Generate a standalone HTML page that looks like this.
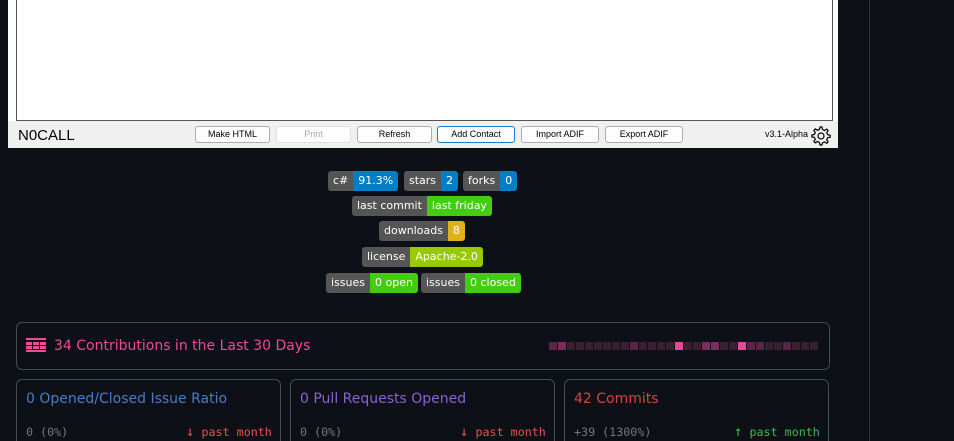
<!DOCTYPE html><html><head><style>
html,body{margin:0;width:954px;height:441px;overflow:hidden}
body{background:#0d1117;position:relative;font-family:"DejaVu Sans","Liberation Sans",sans-serif}
.a{position:absolute}
.vl{left:869px;top:0;width:1px;height:441px;background:#30363d}
.win{left:8px;top:0;width:830px;height:148px;background:#f0f0f0}
.wt{left:0;top:0;width:830px;height:121px;background:#fff}
.txt{left:8px;top:0;width:815px;height:120px;background:#fff;border:1px solid #555;border-top:none}
.btn{position:absolute;top:126px;height:15px;border:1px solid #adadad;border-radius:3px;background:#fdfdfd;font:9px "Liberation Sans",sans-serif;color:#000;text-align:center;line-height:15px}
.bd{position:absolute;height:20px;display:flex;border-radius:3px;overflow:hidden;font-size:11px;color:#fff;line-height:20px}
.bd span{padding:0 5px}
.l{background:#555}
.card{position:absolute;border:1px solid #444c56;border-radius:6px}
.mono{font-family:"DejaVu Sans Mono","Liberation Mono",monospace;font-size:11.7px}
i{display:block;width:8px;height:8px}
</style></head><body>
<div class="a vl"></div>
<div class="a win"><div class="a wt"></div><div class="a txt"></div>
<div class="a" style="left:10px;top:127px;font:15px 'Liberation Sans',sans-serif;color:#000">N0CALL</div>
<div class="btn" style="left:187px;width:73px">Make HTML</div>
<div class="btn" style="left:268px;width:73px;color:#aaa;border-color:#e0e0e0">Print</div>
<div class="btn" style="left:349px;width:73px">Refresh</div>
<div class="btn" style="left:429px;width:76px;border-color:#1f7ad6">Add Contact</div>
<div class="btn" style="left:513px;width:76px">Import ADIF</div>
<div class="btn" style="left:597px;width:76px">Export ADIF</div>
<div class="a" style="left:757px;top:129px;font:9px 'Liberation Sans',sans-serif">v3.1-Alpha</div>
<svg class="a" style="left:799px;top:124px" width="26" height="24" viewBox="0 0 24 24"><path d="M12 3l2 0 .5 2.5 2 1 2.2-1.4 1.4 1.4-1.4 2.2 1 2 2.5.5v2l-2.5.5-1 2 1.4 2.2-1.4 1.4-2.2-1.4-2 1L14 21h-2l-.5-2.5-2-1-2.2 1.4-1.4-1.4 1.4-2.2-1-2L3.8 13v-2l2.5-.5 1-2L5.9 6.3l1.4-1.4 2.2 1.4 2-1z" fill="none" stroke="#000" stroke-width="1.2"/><circle cx="13" cy="12" r="3" fill="none" stroke="#000" stroke-width="1.2"/></svg>
</div>
<div class="bd" style="left:328px;top:171px"><span class="l">c#</span><span style="background:#007ec6">91.3%</span></div>
<div class="bd" style="left:404px;top:171px"><span class="l">stars</span><span style="background:#007ec6">2</span></div>
<div class="bd" style="left:463px;top:171px"><span class="l">forks</span><span style="background:#007ec6">0</span></div>
<div class="bd" style="left:352px;top:196px"><span class="l">last commit</span><span style="background:#4c1">last friday</span></div>
<div class="bd" style="left:379px;top:221px"><span class="l">downloads</span><span style="background:#dfb317">8</span></div>
<div class="bd" style="left:362px;top:247px"><span class="l">license</span><span style="background:#97ca00">Apache-2.0</span></div>
<div class="bd" style="left:326px;top:273px"><span class="l">issues</span><span style="background:#4c1">0 open</span></div>
<div class="bd" style="left:421px;top:273px"><span class="l">issues</span><span style="background:#4c1">0 closed</span></div>
<div class="card" style="left:16px;top:322px;width:812px;height:46px"></div>
<svg class="a" style="left:26px;top:338px" width="20" height="14"><g fill="#f0489a"><rect x="0" y="0" width="20" height="2"/><rect x="0" y="4" width="6" height="3"/><rect x="7" y="4" width="6" height="3"/><rect x="14" y="4" width="6" height="3"/><rect x="0" y="8" width="6" height="3"/><rect x="7" y="8" width="6" height="3"/><rect x="14" y="8" width="6" height="3"/><rect x="0" y="12" width="20" height="2"/></g></svg>
<div class="a" style="left:54px;top:338px;font-size:14px;color:#f0489a">34 Contributions in the Last 30 Days</div>
<div class="card" style="left:16px;top:379px;width:263px;height:80px"></div>
<div class="card" style="left:290px;top:379px;width:263px;height:80px"></div>
<div class="card" style="left:564px;top:379px;width:263px;height:80px"></div>
<div class="a" style="left:26px;top:391px;font-size:14px;color:#4b7cc6">0 Opened/Closed Issue Ratio</div>
<div class="a" style="left:300px;top:391px;font-size:14px;color:#8a63d2">0 Pull Requests Opened</div>
<div class="a" style="left:574px;top:391px;font-size:14px;color:#d5433f">42 Commits</div>
<div class="a mono" style="left:26px;top:425px;color:#777">0 (0%)</div>
<div class="a mono" style="left:186px;top:424px;color:#e5534b"><b style="font-size:14px;font-weight:normal">↓</b> past month</div>
<div class="a mono" style="left:300px;top:425px;color:#777">0 (0%)</div>
<div class="a mono" style="left:460px;top:424px;color:#e5534b"><b style="font-size:14px;font-weight:normal">↓</b> past month</div>
<div class="a mono" style="left:574px;top:425px;color:#777">+39 (1300%)</div>
<div class="a mono" style="left:734px;top:424px;color:#3fb950"><b style="font-size:14px;font-weight:normal">↑</b> past month</div>
<div class="a" style="left:549px;top:342px;display:flex;gap:1px">
<i style="background:#5a2547"></i><i style="background:#7a2e5e"></i><i style="background:#3a1f33"></i><i style="background:#3a1f33"></i><i style="background:#3a1f33"></i><i style="background:#3a1f33"></i><i style="background:#3a1f33"></i><i style="background:#3a1f33"></i><i style="background:#3a1f33"></i><i style="background:#5a2547"></i><i style="background:#3a1f33"></i><i style="background:#3a1f33"></i><i style="background:#3a1f33"></i><i style="background:#3a1f33"></i><i style="background:#e6489a"></i><i style="background:#3a1f33"></i><i style="background:#3a1f33"></i><i style="background:#7a2e5e"></i><i style="background:#7a2e5e"></i><i style="background:#3a1f33"></i><i style="background:#3a1f33"></i><i style="background:#e6489a"></i><i style="background:#5a2547"></i><i style="background:#5a2547"></i><i style="background:#3a1f33"></i><i style="background:#3a1f33"></i><i style="background:#5a2547"></i><i style="background:#3a1f33"></i><i style="background:#3a1f33"></i><i style="background:#3a1f33"></i>
</div>
</body></html>
